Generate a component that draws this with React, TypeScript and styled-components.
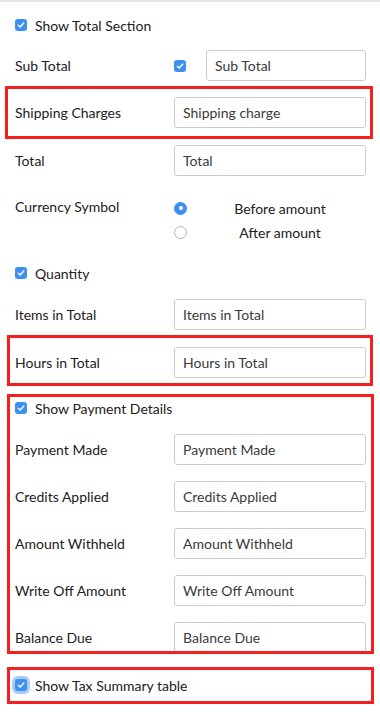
import React from 'react';
import styled, { createGlobalStyle } from 'styled-components';

const GlobalStyle = createGlobalStyle`
  html, body {
    margin: 0;
    padding: 0;
    background: #ffffff;
  }

  body {
    font-family: Lato, 'Open Sans', sans-serif;
    font-size: 14px;
    color: #212121;
  }
`;

const Panel = styled.div`
  width: 380px;
  border-top: 2px solid #e6e6e6;
  display: flex;
  flex-direction: column;
  padding-bottom: 15px;
`;

// red annotation frame drawn over a group of rows
const Highlight = styled.div<{ $mt: number; $top: number; $bottom: number; $left: number; $right: number }>`
  position: relative;
  display: flex;
  flex-direction: column;
  margin-top: ${(p) => p.$mt}px;

  &::after {
    content: '';
    position: absolute;
    top: ${(p) => p.$top}px;
    bottom: ${(p) => p.$bottom}px;
    left: ${(p) => p.$left}px;
    right: ${(p) => p.$right}px;
    border: 3px solid #f51f1f;
    pointer-events: none;
  }
`;

const CheckRow = styled.label<{ $mt: number }>`
  display: flex;
  align-items: center;
  gap: 8px;
  height: 24px;
  padding-left: 15px;
  margin-top: ${(p) => p.$mt}px;
  color: #212121;
`;

const Box = styled.span<{ $focus?: boolean }>`
  width: 12px;
  height: 12px;
  border-radius: 3px;
  background: #3d8ff0;
  display: inline-flex;
  align-items: center;
  justify-content: center;
  flex-shrink: 0;
  box-shadow: ${(p) => (p.$focus ? '0 0 0 3px rgba(61, 143, 240, 0.45)' : 'none')};
`;

const FieldRow = styled.div<{ $mt: number }>`
  display: grid;
  grid-template-columns: 159px 192px;
  align-items: center;
  padding-left: 15px;
  margin-top: ${(p) => p.$mt}px;
  min-height: 31px;
`;

const Label = styled.span<{ $top?: boolean }>`
  color: #212121;
  align-self: ${(p) => (p.$top ? 'start' : 'center')};
  margin-top: ${(p) => (p.$top ? '2px' : '0')};
`;

const Input = styled.input<{ $w?: number }>`
  box-sizing: border-box;
  width: ${(p) => (p.$w ? `${p.$w}px` : '100%')};
  height: 31px;
  border: 1px solid #cccccc;
  border-radius: 3px;
  padding: 0 8px;
  font-family: inherit;
  font-size: 14px;
  color: #3a3a3a;
  background: #fff;
  outline: none;
`;

const SubControl = styled.div`
  display: flex;
  align-items: center;
  gap: 20px;
`;

const RadioGroup = styled.div`
  display: flex;
  flex-direction: column;
`;

const RadioOption = styled.label`
  display: grid;
  grid-template-columns: 12px 1fr;
  align-items: center;
  height: 24px;
  width: 200px;
`;

const RadioDot = styled.span<{ $on?: boolean }>`
  box-sizing: border-box;
  width: 13px;
  height: 13px;
  border-radius: 50%;
  display: inline-flex;
  align-items: center;
  justify-content: center;
  background: ${(p) => (p.$on ? '#3d8ff0' : '#fff')};
  border: ${(p) => (p.$on ? 'none' : '1px solid #b3b3b3')};

  &::after {
    content: '';
    width: 4px;
    height: 4px;
    border-radius: 50%;
    background: ${(p) => (p.$on ? '#fff' : 'transparent')};
  }
`;

const RadioText = styled.span`
  text-align: center;
  color: #212121;
`;

const Check = ({ focus }: { focus?: boolean }) => (
  <Box $focus={focus}>
    <svg width="8" height="8" viewBox="0 0 8 8">
      <path d="M1.3 4.2 L3.2 6 L6.8 2" fill="none" stroke="#fff" strokeWidth="1.4" strokeLinecap="round" strokeLinejoin="round" />
    </svg>
  </Box>
);

const Field = ({ label, value, mt }: { label: string; value: string; mt: number }) => (
  <FieldRow $mt={mt}>
    <Label>{label}</Label>
    <Input defaultValue={value} />
  </FieldRow>
);

const paymentFields = ['Payment Made', 'Credits Applied', 'Amount Withheld', 'Write Off Amount', 'Balance Due'];

export default function App() {
  return (
    <>
      <GlobalStyle />
      <Panel>
        <CheckRow $mt={11}>
          <Check />
          Show Total Section
        </CheckRow>

        <FieldRow $mt={13}>
          <Label>Sub Total</Label>
          <SubControl>
            <Check />
            <Input defaultValue="Sub Total" $w={160} />
          </SubControl>
        </FieldRow>

        <Highlight $mt={16} $top={-11} $bottom={-11} $left={5} $right={7}>
          <Field label="Shipping Charges" value="Shipping charge" mt={0} />
        </Highlight>

        <Field label="Total" value="Total" mt={17} />

        <FieldRow $mt={20}>
          <Label $top>Currency Symbol</Label>
          <RadioGroup>
            <RadioOption>
              <RadioDot $on />
              <RadioText>Before amount</RadioText>
            </RadioOption>
            <RadioOption>
              <RadioDot />
              <RadioText>After amount</RadioText>
            </RadioOption>
          </RadioGroup>
        </FieldRow>

        <CheckRow $mt={17}>
          <Check />
          Quantity
        </CheckRow>

        <Field label="Items in Total" value="Items in Total" mt={14} />

        <Highlight $mt={17} $top={-12} $bottom={-8} $left={7} $right={7}>
          <Field label="Hours in Total" value="Hours in Total" mt={0} />
        </Highlight>

        <Highlight $mt={18} $top={-2} $bottom={-1} $left={7} $right={6}>
          <CheckRow $mt={0}>
            <Check />
            Show Payment Details
          </CheckRow>
          {paymentFields.map((f, i) => (
            <Field key={f} label={f} value={f} mt={i === 0 ? 14 : 16} />
          ))}
        </Highlight>

        <Highlight $mt={20} $top={-6} $bottom={-7} $left={7} $right={6}>
          <CheckRow $mt={0}>
            <Check focus />
            Show Tax Summary table
          </CheckRow>
        </Highlight>
      </Panel>
    </>
  );
}
